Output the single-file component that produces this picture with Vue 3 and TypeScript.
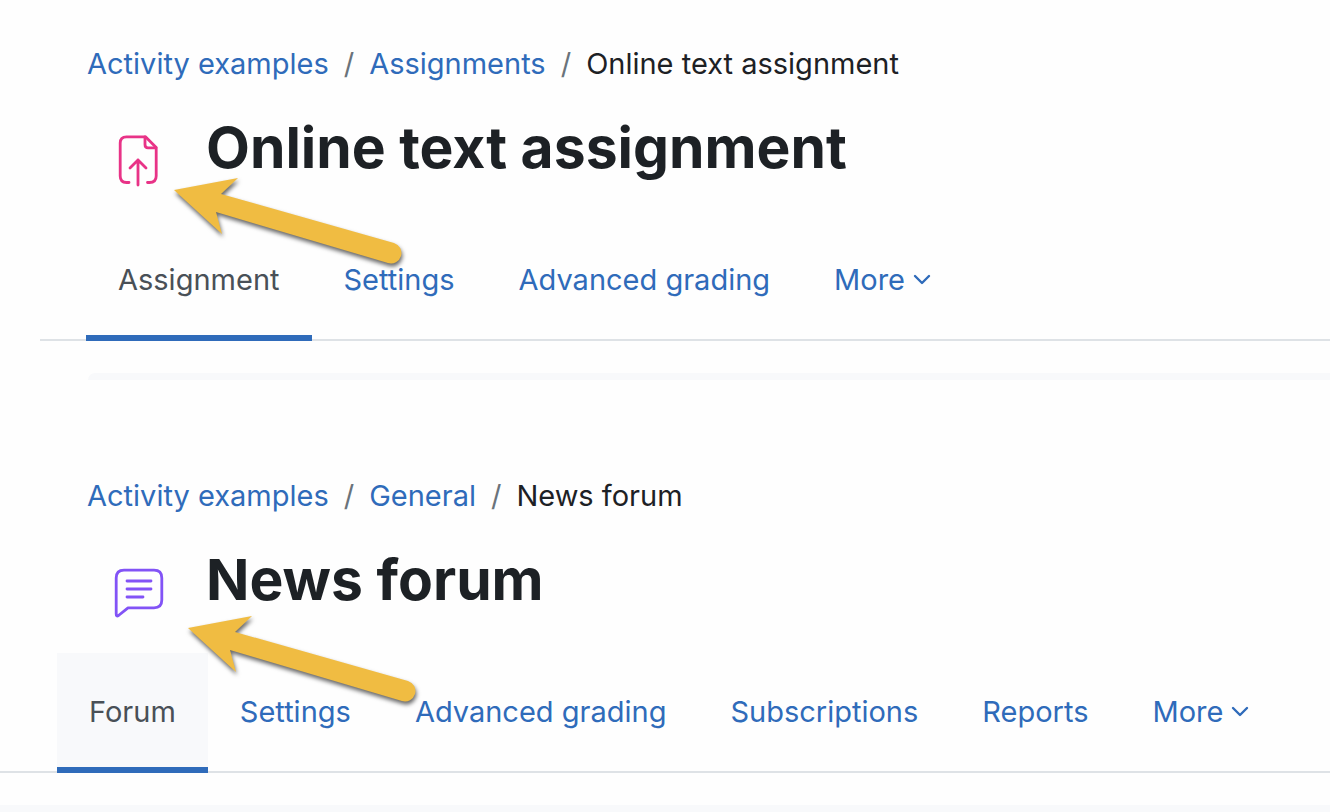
<script setup lang="ts">
interface Activity {
  id: string
  title: string
  crumbs: string[]
  tabs: string[]
}

const activities: Activity[] = [
  {
    id: 'assignment',
    title: 'Online text assignment',
    crumbs: ['Activity examples', 'Assignments'],
    tabs: ['Assignment', 'Settings', 'Advanced grading'],
  },
  {
    id: 'forum',
    title: 'News forum',
    crumbs: ['Activity examples', 'General'],
    tabs: ['Forum', 'Settings', 'Advanced grading', 'Subscriptions', 'Reports'],
  },
]
</script>

<template>
  <main class="page">
    <section v-for="activity in activities" :key="activity.id" class="activity" :class="activity.id">
      <nav class="breadcrumb" aria-label="Breadcrumb">
        <template v-for="crumb in activity.crumbs" :key="crumb">
          <a href="#">{{ crumb }}</a>
          <span class="divider">/</span>
        </template>
        <span class="current">{{ activity.title }}</span>
      </nav>

      <header class="heading">
        <div class="icon-box">
          <svg v-if="activity.id === 'assignment'" class="icon pink" viewBox="0 0 64 64" aria-hidden="true">
            <path d="M23 56.500H20.500Q14.200 56.500 14.200 50V17Q14.200 10.800 20.500 10.800H39.500L50.200 21.500V50Q50.200 56.500 43.500 56.500H41.500" />
            <path d="M39 10.800V18.500Q39 21.800 42 21.800H50" />
            <path d="M32 59V34M24 42L32 34L40 42" />
          </svg>
          <svg v-else class="icon purple" viewBox="0 0 64 64" aria-hidden="true">
            <path d="M10.200 20Q10.200 12.200 18 12.200H48Q55.800 12.200 55.800 20V42Q55.800 49.800 48 49.800H22L12.500 57.500Q10.200 59 10.200 56Z" />
            <path d="M21 23H45M21 31H45M21 39H37" />
          </svg>
          <svg class="pointer" viewBox="0 0 250 120" aria-hidden="true">
            <path d="M4 20L68 8L51 24L224 73A10 10 0 0 1 218 93L46 42L52 64Z" />
          </svg>
        </div>
        <h1>{{ activity.title }}</h1>
      </header>

      <nav class="tabs" aria-label="Activity">
        <a v-for="(tab, index) in activity.tabs" :key="tab" href="#" class="tab" :class="{ active: index === 0 }">{{ tab }}</a>
        <button type="button" class="tab more">
          More
          <svg viewBox="0 0 18 12" aria-hidden="true"><path d="M2 2L9 9L16 2" /></svg>
        </button>
      </nav>

      <div class="panel"></div>
    </section>
  </main>
</template>

<style>
body {
  margin: 0;
  background: #fefefe;
}
</style>

<style scoped>
.page {
  overflow: hidden;
  font-family: Inter, "Liberation Sans", sans-serif;
  font-size: 29px;
  line-height: 44px;
  color: #1d2125;
}

.activity {
  padding-top: 42px;
}

.activity + .activity {
  padding-top: 94px;
}

a {
  color: #2f6bba;
  text-decoration: none;
}

.breadcrumb {
  display: flex;
  gap: 15px;
  margin-left: 87px;
  white-space: nowrap;
}

.divider {
  color: #6a737b;
}

.heading {
  display: flex;
  align-items: flex-start;
  margin: 26px 0 31px 106px;
}

.icon-box {
  position: relative;
  flex: none;
  width: 64px;
  height: 64px;
  margin: 14px 36px 0 0;
}

.icon {
  display: block;
  width: 64px;
  height: 64px;
  fill: none;
  stroke-width: 2.8;
  stroke-linecap: round;
  stroke-linejoin: round;
}

.pink {
  stroke: #e83387;
}

.purple {
  stroke: #8253f6;
}

.pointer {
  position: absolute;
  z-index: 1;
  top: 44px;
  left: 64px;
  width: 250px;
  height: 120px;
  fill: #f0bc42;
  filter: drop-shadow(1px 3px 2px rgb(0 0 0 / 60%));
  pointer-events: none;
}

.forum .pointer {
  top: 50px;
  left: 78px;
}

h1 {
  margin: 0;
  font-size: 57px;
  font-weight: 700;
  line-height: 72px;
  white-space: nowrap;
}

.tabs {
  display: flex;
  margin-left: 40px;
  padding-left: 46px;
  white-space: nowrap;
  box-shadow: inset 0 -2px #dee2e6;
}

.forum .tabs {
  margin-left: 0;
  padding-left: 57px;
}

.tab {
  box-sizing: border-box;
  padding: 37px 32px 33px;
  border: 0;
  border-bottom: 6px solid transparent;
  background: none;
  color: #2f6bba;
  font: inherit;
}

.tab.active {
  border-bottom-color: #2f6bba;
  color: #495057;
}

.forum .tab.active {
  background: #f8f9fb;
}

.more {
  display: flex;
  align-items: center;
  gap: 8px;
  cursor: pointer;
}

.more svg {
  width: 18px;
  height: 12px;
  fill: none;
  stroke: #2f6bba;
  stroke-width: 2.4;
  stroke-linecap: round;
  stroke-linejoin: round;
}

.panel {
  height: 7px;
  margin: 32px 0 0 88px;
  border-radius: 14px 0 0 0;
  background: #f8f9fb;
}

.forum .panel {
  margin-left: 0;
  border-radius: 0;
}
</style>
